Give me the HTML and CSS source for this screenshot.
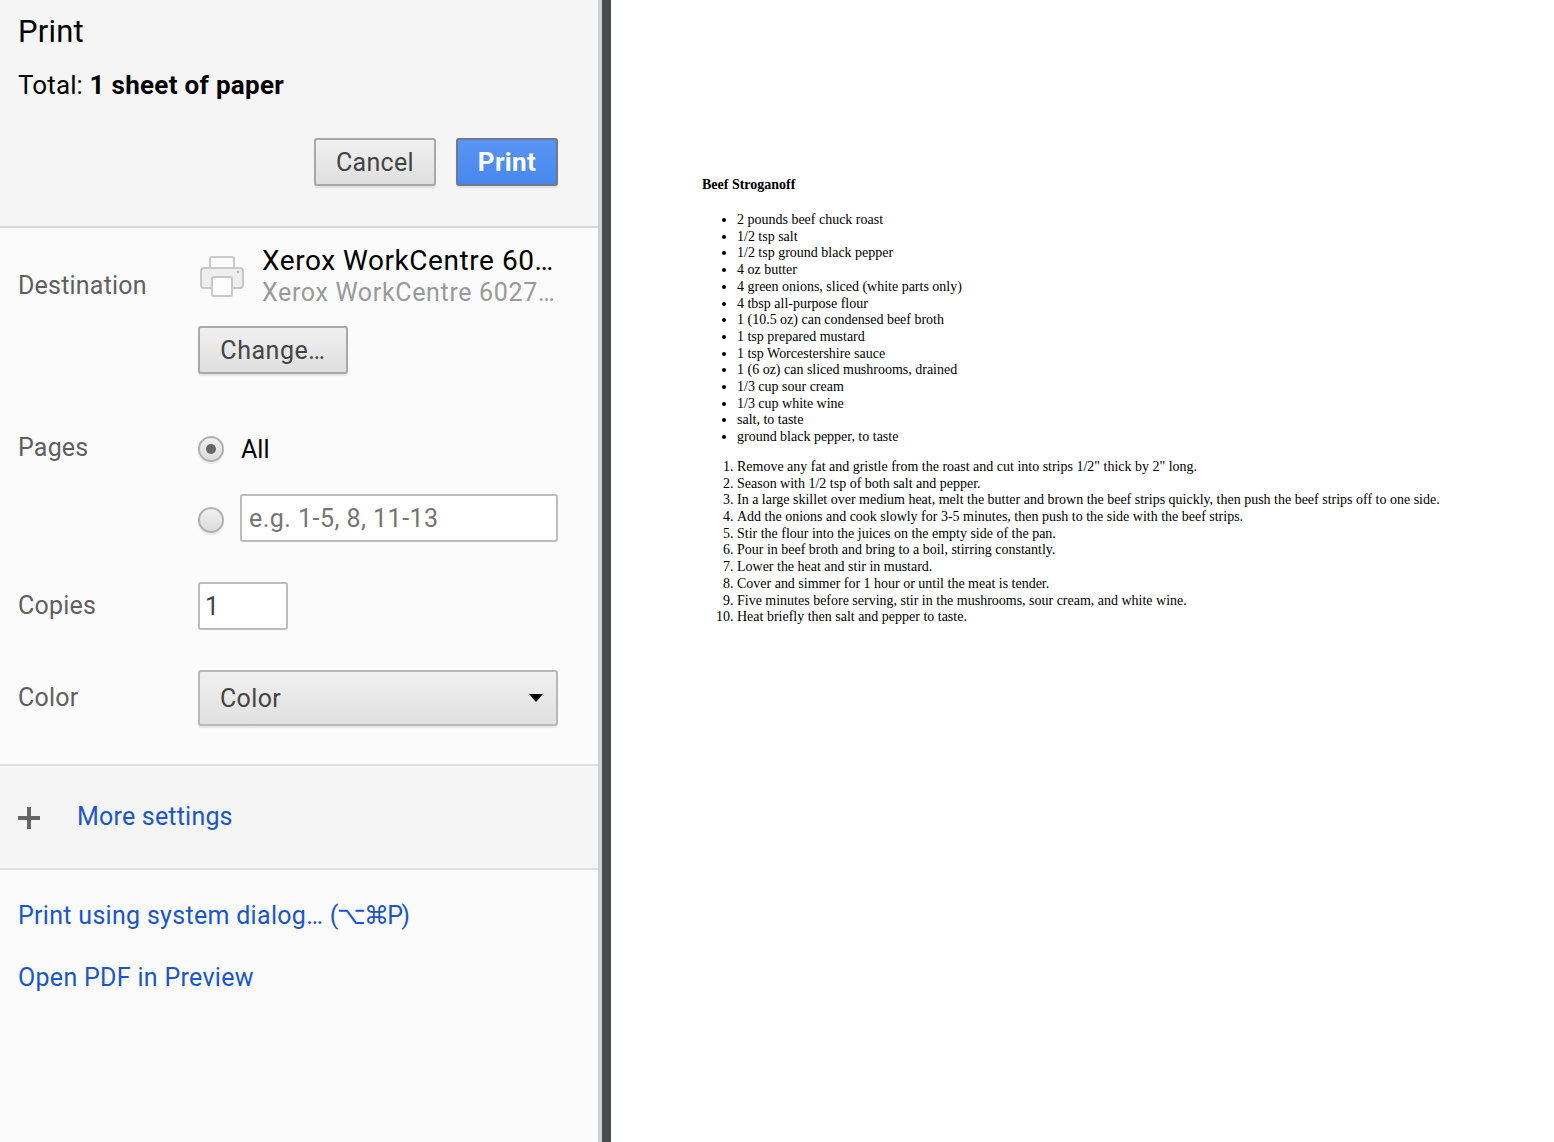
FILE: index.html
```html
<!DOCTYPE html>
<html lang="en">
<head>
<meta charset="utf-8">
<title>Print</title>
<link rel="stylesheet" href="styles.css">
</head>
<body>
<div class="app">
  <aside class="sidebar">
    <header class="head">
      <h1 class="title">Print</h1>
      <p class="total">Total: <b>1 sheet of paper</b></p>
      <div class="actions">
        <button class="btn cancel">Cancel</button>
        <button class="btn primary">Print</button>
      </div>
    </header>
    <section class="settings">
      <div class="row dest-row">
        <div class="label dest-label">Destination</div>
        <div class="control">
          <div class="dest">
            <svg class="printer" width="46" height="44" viewBox="0 0 46 44" aria-hidden="true">
              <rect x="11" y="2" width="24" height="14" rx="1.5" fill="#fbfbfb" stroke="#cbcbcb" stroke-width="2"/>
              <rect x="2" y="13" width="42" height="20" rx="3" fill="#eeeeee" stroke="#c8c8c8" stroke-width="2"/>
              <circle cx="39" cy="17" r="1.4" fill="#bdbdbd"/>
              <rect x="13" y="22" width="20" height="19" rx="1.5" fill="#fdfdfd" stroke="#c8c8c8" stroke-width="2"/>
            </svg>
            <div class="dest-text">
              <div class="dest-name">Xerox WorkCentre 60…</div>
              <div class="dest-sub">Xerox WorkCentre 6027…</div>
            </div>
          </div>
          <button class="btn change">Change…</button>
        </div>
      </div>
      <div class="row pages-row">
        <div class="label">Pages</div>
        <div class="control">
          <div class="radio-line all-line">
            <span class="radio checked"></span>
            <span class="all">All</span>
          </div>
          <div class="radio-line range-line">
            <span class="radio"></span>
            <input class="field range" type="text" placeholder="e.g. 1-5, 8, 11-13">
          </div>
        </div>
      </div>
      <div class="row copies-row">
        <div class="label">Copies</div>
        <div class="control"><input class="field copies" type="text" value="1"></div>
      </div>
      <div class="row color-row">
        <div class="label">Color</div>
        <div class="control">
          <div class="select"><span>Color</span><span class="caret"></span></div>
        </div>
      </div>
    </section>
    <section class="more">
      <svg class="plus" width="24" height="24" viewBox="0 0 24 24" aria-hidden="true"><path d="M1 10h9V1h4v9h9v4h-9v9h-4v-9H1z" fill="#666"/></svg>
      <a class="link more-link">More settings</a>
    </section>
    <section class="links">
      <a class="link">Print using system dialog… <span class="keys">(⌥⌘P)</span></a>
      <a class="link">Open PDF in Preview</a>
    </section>
  </aside>
  <div class="divider"></div>
  <main class="preview">
    <div class="doc">
      <p class="doc-title"><b>Beef Stroganoff</b></p>
      <ul class="ingredients">
        <li>2 pounds beef chuck roast</li>
        <li>1/2 tsp salt</li>
        <li>1/2 tsp ground black pepper</li>
        <li>4 oz butter</li>
        <li>4 green onions, sliced (white parts only)</li>
        <li>4 tbsp all-purpose flour</li>
        <li>1 (10.5 oz) can condensed beef broth</li>
        <li>1 tsp prepared mustard</li>
        <li>1 tsp Worcestershire sauce</li>
        <li>1 (6 oz) can sliced mushrooms, drained</li>
        <li>1/3 cup sour cream</li>
        <li>1/3 cup white wine</li>
        <li>salt, to taste</li>
        <li>ground black pepper, to taste</li>
      </ul>
      <ol class="steps">
        <li>Remove any fat and gristle from the roast and cut into strips 1/2" thick by 2" long.</li>
        <li>Season with 1/2 tsp of both salt and pepper.</li>
        <li>In a large skillet over medium heat, melt the butter and brown the beef strips quickly, then push the beef strips off to one side.</li>
        <li>Add the onions and cook slowly for 3-5 minutes, then push to the side with the beef strips.</li>
        <li>Stir the flour into the juices on the empty side of the pan.</li>
        <li>Pour in beef broth and bring to a boil, stirring constantly.</li>
        <li>Lower the heat and stir in mustard.</li>
        <li>Cover and simmer for 1 hour or until the meat is tender.</li>
        <li>Five minutes before serving, stir in the mushrooms, sour cream, and white wine.</li>
        <li>Heat briefly then salt and pepper to taste.</li>
      </ol>
    </div>
  </main>
</div>
</body>
</html>
```
FILE: styles.css
```css
* { box-sizing: border-box; }
html, body { margin: 0; height: 100%; overflow: hidden; background: #fff; }
.app { display: flex; height: 1142px; font-family: Roboto, "Liberation Sans", sans-serif; }
.sidebar { width: 598px; flex: none; background: #fbfbfb; display: flex; flex-direction: column; }
.divider { width: 13px; flex: none; background: linear-gradient(90deg, #cfcfcf 0 4px, #484c4f 4px 100%); }
.preview { flex: 1; background: #fff; }

.head { height: 228px; background: #f5f5f5; border-bottom: 2px solid #d8d8d8; padding: 13px 40px 0 18px; }
.title { margin: 0; font-size: 31px; line-height: 38px; font-weight: 400; color: #000; letter-spacing: .2px; }
.total { margin: 18px 0 0; font-size: 26px; line-height: 32px; color: #000; letter-spacing: .1px; }
.total b { font-weight: 700; letter-spacing: .3px; }
.actions { display: flex; justify-content: flex-end; gap: 20px; margin-top: 37px; }

.btn { font-family: inherit; font-size: 25px; height: 48px; border-radius: 3px; border: 2px solid #a8a8a8; background: linear-gradient(#f0f0f0, #dfdfdf); color: #444; padding: 0; letter-spacing: .3px; box-shadow: 0 2px 1px rgba(0,0,0,.08); }
.cancel { width: 122px; }
.primary { width: 102px; font-size: 26px; font-weight: 700; letter-spacing: .4px; color: #fff; background: linear-gradient(#5a95f2, #4787ed); border-color: #707a8a; }
.change { width: 150px; letter-spacing: .55px; }

.settings { height: 536px; padding-top: 16px; display: flex; flex-direction: column; }
.row { display: flex; padding: 0 40px 0 18px; }
.label { width: 180px; flex: none; font-size: 25px; color: #5f5f5f; line-height: 32px; letter-spacing: .2px; }
.control { flex: 1; min-width: 0; }
.dest-row { height: 172px; }
.dest-label { padding-top: 26px; }
.dest { display: flex; gap: 17px; height: 66px; }
.printer { flex: none; margin-top: 11px; margin-left: 1px; filter: blur(.6px); }
.dest-name { font-size: 28px; line-height: 34px; color: #000; white-space: nowrap; letter-spacing: .55px; }
.dest-sub { font-size: 25px; line-height: 28px; color: #9a9a9a; white-space: nowrap; letter-spacing: .66px; margin-top: 1px; }
.change { margin-top: 16px; }

.pages-row { height: 166px; padding-top: 15px; }
.radio-line { display: flex; align-items: center; }
.all-line { height: 36px; gap: 17px; }
.all { font-size: 25px; color: #000; }
.range-line { height: 48px; gap: 16px; margin-top: 27px; }
.radio { width: 26px; height: 26px; border-radius: 50%; border: 2px solid #b0b0b0; background: linear-gradient(#f0f0f0, #dcdcdc); box-shadow: 0 2px 1px rgba(0,0,0,.08); position: relative; flex: none; margin-top: 4px; }
.checked { margin-top: 0; }
.checked::after { content: ""; position: absolute; left: 6px; top: 6px; width: 10px; height: 10px; border-radius: 50%; background: #666; }
.field { font-family: inherit; font-size: 25px; height: 48px; border: 2px solid #bcbcbc; border-radius: 3px; background: #fff; color: #444; padding: 0 7px 0 7px; outline: none; }
.field::placeholder { color: #757575; opacity: 1; }
.range { flex: 1; min-width: 0; letter-spacing: .47px; }
.copies { width: 90px; margin-top: 0; padding-left: 5px; }
.copies-row { height: 88px; padding-top: 0; }
.copies-row .label { padding-top: 8px; }
.pages-row .label { padding-top: 1px; }
.color-row .label { padding-top: 12px; }
.select { height: 56px; border: 2px solid #b8b8b8; border-radius: 3px; background: linear-gradient(#f0f0f0, #e0e0e0); box-shadow: 0 2px 1px rgba(0,0,0,.08); display: flex; align-items: center; justify-content: space-between; padding: 0 12px 0 20px; font-size: 25px; color: #444; letter-spacing: .35px; }
.caret { width: 0; height: 0; border-left: 7.5px solid transparent; border-right: 7.5px solid transparent; border-top: 8px solid #000; margin-right: 1px; }

.more { height: 106px; flex: none; background: #f5f5f5; border-top: 2px solid #e0e0e0; border-bottom: 2px solid #e0e0e0; display: flex; align-items: center; gap: 36px; padding-left: 17px; }
.plus { flex: none; margin-top: 1px; }
.link { font-size: 25px; line-height: 32px; color: #1a56cc; display: block; letter-spacing: .3px; }
.more-link { letter-spacing: .2px; }
.keys { letter-spacing: -1.7px; }
.links { padding: 30px 18px 0; display: flex; flex-direction: column; gap: 30px; }

.doc { padding: 177.4px 40px 0 91px; font-family: "Liberation Serif", serif; font-size: 13.99px; line-height: 16.69px; color: #000; }
.doc-title { margin: 0 0 18px; }
.doc ul, .doc ol { margin: 0 0 13.3px; padding: 0 0 0 35px; }
```
